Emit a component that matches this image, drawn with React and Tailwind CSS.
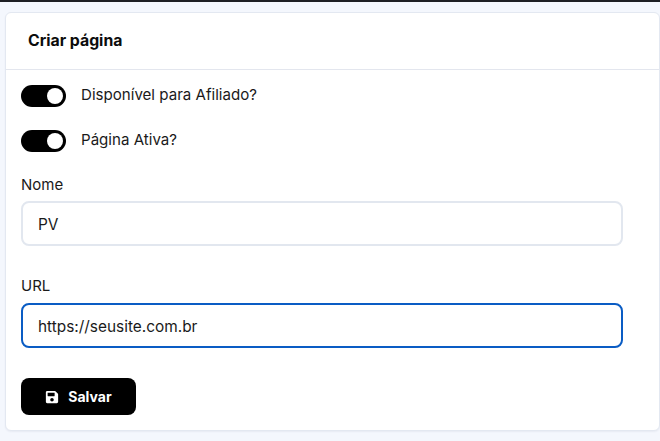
import { FaSave } from 'react-icons/fa'

function Toggle({ label }) {
  return (
    <div className="flex items-center gap-[15px]">
      <div className="flex h-[22px] w-[45px] items-center justify-end rounded-full bg-black pr-[3px]">
        <div className="h-[16px] w-[16px] rounded-full bg-white" />
      </div>
      <span className="-mt-[3px] text-[15.1px] leading-[20px] text-[#1a1a1a]">{label}</span>
    </div>
  )
}

export default function App() {
  return (
    <div className="h-[441px] overflow-hidden bg-[#f4f7fd] font-['Inter',sans-serif]">
      <div className="h-[2px] bg-[#1e1f24]" />
      <div className="pl-[5px] pt-[10px]">
        <div className="h-[419px] w-[655px] rounded-[6px] border border-[#e3e8f1] bg-white shadow-[0_1px_2px_rgba(30,40,80,0.06)]">
          <div className="flex h-[57px] items-center border-b border-[#e3e6ee] pl-[22px]">
            <h3 className="text-[15.8px] font-bold text-[#0c0c0c]">Criar página</h3>
          </div>
          <div className="flex flex-col pl-[15px] pt-[15px]">
            <div className="flex flex-col gap-[23px]">
              <Toggle label="Disponível para Afiliado?" />
              <Toggle label="Página Ativa?" />
            </div>
            <label className="mt-[23px] text-[15px] leading-[20px] text-[#1a1a1a]">Nome</label>
            <input
              readOnly
              value="PV"
              className="mt-[6px] h-[45px] w-[602px] rounded-[8px] border-2 border-[#e2e7ef] bg-white px-[15px] pt-[1px] text-[15.4px] text-[#1a1a1a] outline-none"
            />
            <label className="mt-[30px] text-[15px] leading-[20px] text-[#1a1a1a]">URL</label>
            <input
              readOnly
              value="https://seusite.com.br"
              className="mt-[7px] h-[45px] w-[602px] rounded-[8px] border-2 border-[#0a5cc4] bg-white px-[15px] pt-[1px] text-[15.4px] text-[#1a1a1a] outline-none"
            />
            <button className="mt-[30px] flex h-[37px] w-[115px] items-center justify-center gap-[9px] rounded-[8px] bg-black text-[14px] font-bold text-white">
              <FaSave size={14} />
              Salvar
            </button>
          </div>
        </div>
      </div>
    </div>
  )
}
